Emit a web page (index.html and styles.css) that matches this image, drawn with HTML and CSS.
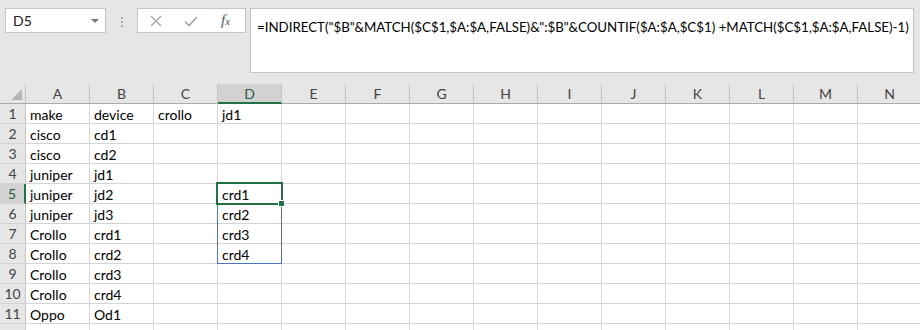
FILE: index.html
```html
<!DOCTYPE html>
<html lang="en">
<head>
    <meta charset="UTF-8">
    <meta name="viewport" content="width=device-width, initial-scale=1.0">
    <title>Sheet1</title>
    <link rel="stylesheet" href="styles.css">
</head>
<body>
    <div class="toolbar">
        <div class="name-box">
            <span>D5</span>
            <span class="arrow"></span>
        </div>
        <div class="grip">
            <span></span><span></span><span></span>
        </div>
        <div class="fx-box">
            <svg class="icon" width="14" height="14" viewBox="0 0 14 14">
                <path d="M2 2 L12 12 M12 2 L2 12" stroke="#a6a6a6" stroke-width="1.4" fill="none"/>
            </svg>
            <svg class="icon" width="16" height="14" viewBox="0 0 16 14">
                <path d="M2 7.5 L6 11.5 L14 3" stroke="#a6a6a6" stroke-width="1.6" fill="none"/>
            </svg>
            <span class="fx"><i>f</i><i class="x">x</i></span>
        </div>
        <div class="formula">=INDIRECT("$B"&amp;MATCH($C$1,$A:$A,FALSE)&amp;":$B"&amp;COUNTIF($A:$A,$C$1) +MATCH($C$1,$A:$A,FALSE)-1)</div>
    </div>

    <div class="sheet">
        <div class="row head">
            <div class="corner"><span class="tri"></span></div>
            <div class="col">A</div><div class="col">B</div><div class="col">C</div><div class="col active">D</div>
            <div class="col">E</div><div class="col">F</div><div class="col">G</div><div class="col">H</div>
            <div class="col">I</div><div class="col">J</div><div class="col">K</div><div class="col">L</div>
            <div class="col">M</div><div class="col">N</div>
        </div>
        <div class="row">
            <div class="num">1</div><div class="c">make</div><div class="c">device</div><div class="c">crollo</div><div class="c">jd1</div>
            <div class="c"></div><div class="c"></div><div class="c"></div><div class="c"></div><div class="c"></div><div class="c"></div><div class="c"></div><div class="c"></div><div class="c"></div><div class="c"></div>
        </div>
        <div class="row">
            <div class="num">2</div><div class="c">cisco</div><div class="c">cd1</div><div class="c"></div><div class="c"></div>
            <div class="c"></div><div class="c"></div><div class="c"></div><div class="c"></div><div class="c"></div><div class="c"></div><div class="c"></div><div class="c"></div><div class="c"></div><div class="c"></div>
        </div>
        <div class="row">
            <div class="num">3</div><div class="c">cisco</div><div class="c">cd2</div><div class="c"></div><div class="c"></div>
            <div class="c"></div><div class="c"></div><div class="c"></div><div class="c"></div><div class="c"></div><div class="c"></div><div class="c"></div><div class="c"></div><div class="c"></div><div class="c"></div>
        </div>
        <div class="row">
            <div class="num">4</div><div class="c">juniper</div><div class="c">jd1</div><div class="c"></div><div class="c"></div>
            <div class="c"></div><div class="c"></div><div class="c"></div><div class="c"></div><div class="c"></div><div class="c"></div><div class="c"></div><div class="c"></div><div class="c"></div><div class="c"></div>
        </div>
        <div class="row">
            <div class="num active">5</div><div class="c">juniper</div><div class="c">jd2</div><div class="c"></div><div class="c">crd1</div>
            <div class="c"></div><div class="c"></div><div class="c"></div><div class="c"></div><div class="c"></div><div class="c"></div><div class="c"></div><div class="c"></div><div class="c"></div><div class="c"></div>
        </div>
        <div class="row">
            <div class="num">6</div><div class="c">juniper</div><div class="c">jd3</div><div class="c"></div><div class="c">crd2</div>
            <div class="c"></div><div class="c"></div><div class="c"></div><div class="c"></div><div class="c"></div><div class="c"></div><div class="c"></div><div class="c"></div><div class="c"></div><div class="c"></div>
        </div>
        <div class="row">
            <div class="num">7</div><div class="c">Crollo</div><div class="c">crd1</div><div class="c"></div><div class="c">crd3</div>
            <div class="c"></div><div class="c"></div><div class="c"></div><div class="c"></div><div class="c"></div><div class="c"></div><div class="c"></div><div class="c"></div><div class="c"></div><div class="c"></div>
        </div>
        <div class="row">
            <div class="num">8</div><div class="c">Crollo</div><div class="c">crd2</div><div class="c"></div><div class="c">crd4</div>
            <div class="c"></div><div class="c"></div><div class="c"></div><div class="c"></div><div class="c"></div><div class="c"></div><div class="c"></div><div class="c"></div><div class="c"></div><div class="c"></div>
        </div>
        <div class="row">
            <div class="num">9</div><div class="c">Crollo</div><div class="c">crd3</div><div class="c"></div><div class="c"></div>
            <div class="c"></div><div class="c"></div><div class="c"></div><div class="c"></div><div class="c"></div><div class="c"></div><div class="c"></div><div class="c"></div><div class="c"></div><div class="c"></div>
        </div>
        <div class="row">
            <div class="num">10</div><div class="c">Crollo</div><div class="c">crd4</div><div class="c"></div><div class="c"></div>
            <div class="c"></div><div class="c"></div><div class="c"></div><div class="c"></div><div class="c"></div><div class="c"></div><div class="c"></div><div class="c"></div><div class="c"></div><div class="c"></div>
        </div>
        <div class="row">
            <div class="num">11</div><div class="c">Oppo</div><div class="c">Od1</div><div class="c"></div><div class="c"></div>
            <div class="c"></div><div class="c"></div><div class="c"></div><div class="c"></div><div class="c"></div><div class="c"></div><div class="c"></div><div class="c"></div><div class="c"></div><div class="c"></div>
        </div>
        <div class="row">
            <div class="num"></div><div class="c"></div><div class="c"></div><div class="c"></div><div class="c"></div>
            <div class="c"></div><div class="c"></div><div class="c"></div><div class="c"></div><div class="c"></div><div class="c"></div><div class="c"></div><div class="c"></div><div class="c"></div><div class="c"></div>
        </div>

        <div class="spill"></div>
        <div class="selection"></div>
        <div class="handle"></div>
    </div>
</body>
</html>
```

FILE: styles.css
```css
body {
    margin: 0;
    font-family: Lato, "Liberation Sans", sans-serif;
    font-size: 14px;
    color: #000;
    background-color: #fff;
    overflow: hidden;
}
.toolbar {
    display: flex;
    align-items: flex-start;
    height: 84px;
    padding: 8px 6px 0 5px;
    box-sizing: border-box;
    background-color: #e6e6e6;
}
.name-box {
    flex-shrink: 0;
    display: flex;
    align-items: center;
    justify-content: space-between;
    width: 101px;
    height: 25px;
    padding: 0 6px 0 7px;
    box-sizing: border-box;
    background-color: #fff;
    border: 1px solid #c6c6c6;
    color: #222;
}
.arrow {
    width: 0;
    height: 0;
    border-left: 4px solid transparent;
    border-right: 4px solid transparent;
    border-top: 4px solid #777;
}
.grip {
    flex-shrink: 0;
    display: flex;
    flex-direction: column;
    align-items: center;
    gap: 2px;
    width: 31px;
    padding-top: 9px;
}
.grip span {
    width: 2px;
    height: 2px;
    background-color: #a8a8a8;
}
.fx-box {
    flex-shrink: 0;
    display: flex;
    align-items: center;
    width: 109px;
    height: 25px;
    box-sizing: border-box;
    padding-left: 11px;
    background-color: #fff;
    border: 1px solid #c6c6c6;
}
.fx-box .icon:first-child {
    margin-right: 20px;
}
.fx {
    margin-left: 22px;
    font-family: "Liberation Serif", serif;
    font-size: 15px;
    color: #555;
}
.fx .x {
    font-size: 11px;
}
.formula {
    flex: 1;
    min-width: 0;
    height: 65px;
    margin-left: 4px;
    padding: 8px 0 0 6px;
    box-sizing: border-box;
    background-color: #fff;
    border: 1px solid #c6c6c6;
    font-size: 13.3px;
    line-height: 20px;
    white-space: nowrap;
    overflow: hidden;
}
.sheet {
    position: relative;
}
.row {
    display: grid;
    grid-template-columns: 26px repeat(14, 64px);
    height: 20px;
}
.row > div {
    box-sizing: border-box;
    border-right: 1px solid #d4d4d4;
    border-bottom: 1px solid #d4d4d4;
    line-height: 19px;
    white-space: nowrap;
    overflow: hidden;
}
.head > div {
    background-color: #e6e6e6;
    color: #444;
    text-align: center;
    border-right-color: #c4c4c4;
    border-bottom-color: #ababab;
}
.head .active {
    background-color: #d2d2d2;
    color: #2a5a3e;
    border-bottom: 2px solid #217346;
}
.corner {
    position: relative;
}
.tri {
    position: absolute;
    right: 3px;
    bottom: 3px;
    width: 0;
    height: 0;
    border-left: 11px solid transparent;
    border-bottom: 11px solid #b5b5b5;
}
.num {
    background-color: #e6e6e6;
    color: #444;
    text-align: center;
}
.row > .num {
    border-right-color: #c4c4c4;
    border-bottom-color: #d4d4d4;
}
.row > .num.active {
    background-color: #d2d2d2;
    color: #2a5a3e;
    border-right: 2px solid #217346;
}
.c {
    padding: 1px 3px 0 4px;
}
.spill {
    position: absolute;
    left: 217px;
    top: 99px;
    width: 65px;
    height: 81px;
    box-sizing: border-box;
    border: 1px solid #4a76c0;
}
.selection {
    position: absolute;
    left: 216px;
    top: 98px;
    width: 67px;
    height: 23px;
    box-sizing: border-box;
    border: 2px solid #217346;
}
.handle {
    position: absolute;
    left: 278px;
    top: 116px;
    width: 7px;
    height: 7px;
    box-sizing: border-box;
    background-color: #217346;
    border: 1px solid #fff;
}
```
